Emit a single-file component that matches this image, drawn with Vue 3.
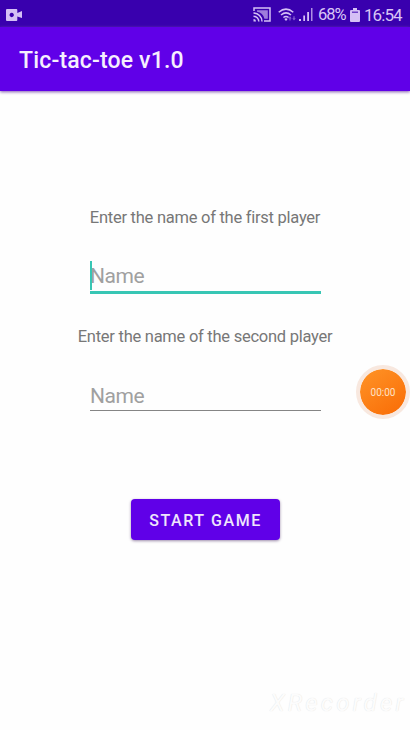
<script setup>
import { ref } from 'vue'

const first = ref('')
const second = ref('')
</script>

<template>
  <div class="screen">
    <div class="status">
      <svg class="cam" viewBox="0 0 16 12" width="16" height="12">
        <path fill-rule="evenodd" d="M1 0H10.5Q11.3 0 11.3 1V4L16 2V9L11.3 7.5V11Q11.3 12 10.5 12H1Q0 12 0 11V1Q0 0 1 0ZM5.7 3.8a2.2 2.2 0 1 0 .01 0Z" />
      </svg>
      <div class="tray">
        <svg class="cast" viewBox="0 0 18 15" width="18" height="15">
          <path class="line" d="M1 4V1H17V14H11" />
          <path d="M4 3.3H14.8V11.8H11.4A9 9 0 0 0 4 4.8Z" opacity=".65" />
          <path class="line" d="M.5 6A8.5 8.5 0 0 1 9 14.5M.5 9.2A5.3 5.3 0 0 1 5.8 14.5" />
          <path d="M.5 12A2.5 2.5 0 0 1 3 14.5H.5Z" />
        </svg>
        <svg class="wifi" viewBox="0 0 18 14" width="18" height="14">
          <path class="line" d="M.7 4.2Q8 -2 15.3 4.2M3 7Q8 2.8 13 7M5.4 9.5Q8 7.4 10.6 9.5" />
          <path d="M6.3 11Q8 9.7 9.7 11L8 13Z" />
          <path d="M12 8.3L13.7 10.5H12.6V12.5H11.4V10.5H10.3ZM16 12.5L14.3 10.3H15.4V8.3H16.6V10.3H17.7Z" opacity=".5" />
        </svg>
        <svg class="signal" viewBox="0 0 14 13" width="14" height="13">
          <path d="M0 11H2V13H0ZM4.3 7.5H6V13H4.3ZM8.2 4H10V13H8.2Z" />
          <path d="M12 0H13.5V13H12Z" opacity=".75" />
        </svg>
        <span class="percent">68%</span>
        <svg class="battery" viewBox="0 0 10 14" width="10" height="14">
          <path d="M3 0H7V2H9Q10 2 10 3V13Q10 14 9 14H1Q0 14 0 13V3Q0 2 1 2H3Z" />
          <path d="M2 3.5H8V5H2Z" fill="#3900ae" opacity=".65" />
        </svg>
        <span class="clock">16:54</span>
      </div>
    </div>
    <header class="bar"><h1>Tic-tac-toe v1.0</h1></header>
    <main class="form">
      <label class="first-label" for="first">Enter the name of the first player</label>
      <div class="field active"><input id="first" v-model="first" placeholder="Name" /></div>
      <label class="second-label" for="second">Enter the name of the second player</label>
      <div class="field"><input id="second" v-model="second" placeholder="Name" /></div>
      <button type="button">START GAME</button>
    </main>
    <div class="timer">00:00</div>
    <div class="watermark">XRecorder</div>
  </div>
</template>

<style>
body { margin: 0; overflow: hidden; }
</style>

<style scoped>
.screen {
  position: relative;
  display: flex;
  flex-direction: column;
  width: 410px;
  height: 730px;
  overflow: hidden;
  background: #fefefe;
  font-family: Roboto, sans-serif;
}
.status {
  flex: none;
  display: flex;
  align-items: center;
  justify-content: space-between;
  box-sizing: border-box;
  height: 27px;
  padding: 2px 8px 0 6px;
  background: #3900ae;
  color: #d8c5f5;
}
svg { display: block; fill: #d5c0f5; }
.line { fill: none; stroke: #d5c0f5; stroke-width: 1.5; }
.tray { display: flex; align-items: center; }
.wifi { margin-left: 7px; }
.signal { margin-left: 3px; }
.percent { margin-left: 5px; width: 27px; font-size: 16.5px; letter-spacing: -1px; line-height: 20px; padding-top: 1px; }
.battery { margin-left: 5px; }
.clock { margin-left: 4px; width: 38px; font-size: 17px; letter-spacing: -0.95px; line-height: 20px; padding-top: 1px; white-space: nowrap; }
.bar {
  flex: none;
  display: flex;
  align-items: center;
  box-sizing: border-box;
  height: 64px;
  padding: 3px 19px 0;
  background: #6000e8;
  box-shadow: 0 1px 3px #8058b0;
}
h1 { margin: 0; color: #f6effe; font-size: 23px; font-weight: 500; line-height: 28px; letter-spacing: 0.17px; }
.form { display: flex; flex-direction: column; align-items: center; padding-top: 117px; }
label { height: 20px; color: #777; font-size: 16.5px; line-height: 20px; letter-spacing: -0.26px; white-space: nowrap; }
.field {
  box-sizing: border-box;
  width: 231px;
  height: 31px;
  border-bottom: 1px solid #858585;
}
.first-label + .field { margin: 33px 0; height: 33px; }
.second-label + .field { margin-top: 33px; }
.field.active { border-bottom: 3px solid #37c6b4; }
input {
  display: block;
  box-sizing: border-box;
  width: 100%;
  height: 29px;
  padding: 2px 0 0;
  border: 0;
  outline: 0;
  background: none;
  color: #444;
  font: 21px/27px Roboto, sans-serif;
  letter-spacing: -0.4px;
  text-indent: 0.5px;
}
.active input { border-left: 2px solid #37c6b4; padding-top: 1px; text-indent: -1.5px; }
input::placeholder { color: #a0a0a0; opacity: 1; }
button {
  width: 149px;
  height: 41px;
  margin-top: 88px;
  padding: 2px 0 0 1px;
  border: 0;
  border-radius: 4px;
  background: #6000e8;
  box-shadow: 0 1px 3px #9b8aaa;
  color: #efe5fc;
  font: 500 16px/39px Roboto, sans-serif;
  letter-spacing: 1.6px;
  white-space: nowrap;
}
.timer {
  position: absolute;
  left: 356px;
  top: 365px;
  width: 46px;
  height: 46px;
  border: 4px solid #f8e8df;
  border-radius: 50%;
  background: linear-gradient(145deg, #ff9427, #f96b05) padding-box;
  color: #ffe2c6;
  font-size: 10px;
  line-height: 48px;
  text-align: center;
}
.watermark {
  position: absolute;
  left: 270px;
  top: 689px;
  color: #fcfcfc;
  font-size: 24px;
  font-style: italic;
  line-height: 28px;
  letter-spacing: 3.2px;
  text-shadow: 0 0 1px #dcdcdc;
}
</style>
